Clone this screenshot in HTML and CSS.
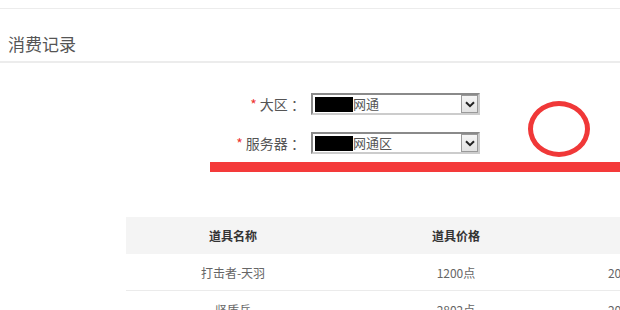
FILE: index.html
```html
<!DOCTYPE html>
<html lang="zh-CN">
<head>
    <meta charset="UTF-8">
    <meta name="viewport" content="width=device-width, initial-scale=1.0">
    <title>消费记录</title>
    <link rel="stylesheet" href="styles.css">
</head>
<body>
    <div class="topbar"></div>
    <div class="title">消费记录</div>
    <div class="form">
        <div class="row">
            <label class="label"><span class="star">*</span> 大区 ：</label>
            <div class="select">
                <span class="mask"></span><span class="val">网通</span>
                <span class="arrow"><svg width="10" height="7" viewBox="0 0 10 7"><path d="M1 1.2 L5 5.2 L9 1.2" fill="none" stroke="#222" stroke-width="2"/></svg></span>
            </div>
        </div>
        <div class="row">
            <label class="label"><span class="star">*</span> 服务器 ：</label>
            <div class="select">
                <span class="mask"></span><span class="val">网通区</span>
                <span class="arrow"><svg width="10" height="7" viewBox="0 0 10 7"><path d="M1 1.2 L5 5.2 L9 1.2" fill="none" stroke="#222" stroke-width="2"/></svg></span>
            </div>
        </div>
        <!-- 标注的红圈 -->
        <div class="circle"></div>
    </div>
    <div class="redbar"></div>
    <table class="list">
        <tr>
            <th class="c1">道具名称</th>
            <th class="c2">道具价格</th>
            <th class="c3">购买时间</th>
        </tr>
        <tr>
            <td>打击者-天羽</td>
            <td>1200点</td>
            <td>2017-06-12 20:13:45</td>
        </tr>
        <tr>
            <td>坚盾兵</td>
            <td>2802点</td>
            <td>2017-06-10 19:02:11</td>
        </tr>
    </table>
</body>
</html>
```

FILE: styles.css
```css
body{
    margin:0;
    background:#fff;
    font-family:"Noto Sans CJK SC","Noto Sans",sans-serif;
    color:#555;
    overflow:hidden;
    width:620px;
}
.topbar{
    height:8px;
    border-bottom:1px solid #ececec;
}
.title{
    height:26px;
    padding-top:26px;
    line-height:17px;
    padding-left:8px;
    font-size:17px;
    color:#555;
    border-bottom:2px solid #ececec;
}
/* 表单 */
.form{
    position:relative;
    padding-top:30px;
    display:flex;
    flex-direction:column;
    gap:17px;
}
.row{
    display:flex;
    align-items:center;
    height:22px;
}
.label{
    width:305px;
    text-align:right;
    font-size:14px;
    color:#555;
}
.star{
    color:#e33;
}
.select{
    margin-left:6px;
    width:165px;
    height:18px;
    border:2px solid #8a8a8a;
    border-right-color:#ccc;
    border-bottom-color:#ccc;
    display:flex;
    align-items:center;
    background:#fff;
}
.mask{
    width:38px;
    height:15px;
    background:#000;
    margin-left:2px;
}
.val{
    font-size:13px;
    color:#555;
    line-height:18px;
}
.arrow{
    margin-left:auto;
    width:15px;
    height:16px;
    border:1px solid #9a9a9a;
    background:linear-gradient(#f6f6f6,#e2e2e2);
    display:flex;
    align-items:center;
    justify-content:center;
}
.circle{
    position:absolute;
    left:528px;
    top:38px;
    width:52px;
    height:46px;
    border:5px solid #f03838;
    border-radius:50%;
}
.redbar{
    margin:8px 0 0 210px;
    height:10px;
    background:#f43a3a;
}
/* 表格 */
.list{
    margin:45px 0 0 126px;
    border-collapse:collapse;
    width:720px;
    font-size:12px;
}
.list th{
    height:35px;
    background:#f4f4f4;
    color:#333;
    font-weight:bold;
    text-align:center;
}
.list td{
    height:34px;
    text-align:center;
    color:#666;
    border-bottom:1px solid #ebebeb;
}
.list .c1{width:214px;}
.list .c2{width:232px;}
.list .c3{width:274px;}
.list td:nth-child(3){
    text-align:left;
    padding-left:36px;
}
```
